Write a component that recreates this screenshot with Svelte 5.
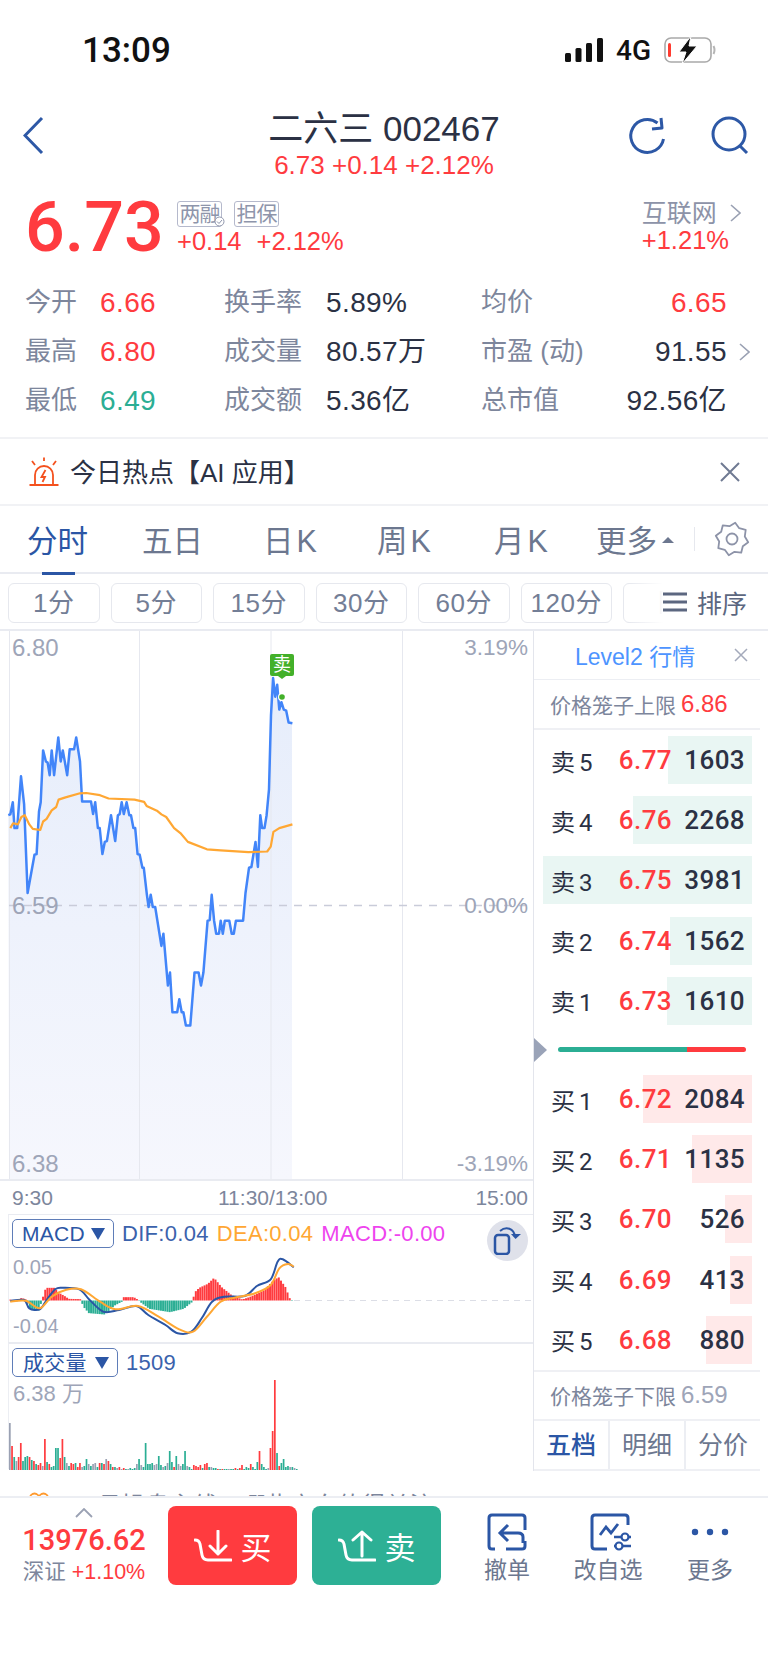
<script>
  const red = '#ff3b3f';
  const green = '#2bae94';

  // traced in the coordinates of the chart crop, scaled below
  const blueRaw = [[24,500],[30,498],[37,465],[42,535],[50,535],[61,395],[70,470],[80,710],[100,607],[106,605],[113,490],[118,465],[125,325],[133,355],[138,358],[144,392],[150,325],[157,392],[169,290],[176,355],[182,325],[195,392],[202,322],[215,322],[221,290],[232,355],[238,463],[264,463],[270,497],[276,465],[284,535],[289,535],[297,605],[304,572],[310,570],[322,500],[334,570],[342,500],[347,497],[353,465],[359,497],[367,465],[375,500],[380,500],[387,535],[392,535],[399,605],[405,607],[413,642],[417,642],[426,715],[431,748],[437,715],[443,748],[450,748],[468,853],[474,820],[487,960],[493,925],[500,1032],[514,1032],[520,997],[527,1032],[532,1032],[539,1068],[552,1068],[564,925],[576,925],[583,960],[590,925],[602,785],[608,783],[614,715],[621,785],[627,820],[635,820],[640,785],[646,820],[652,785],[665,785],[672,820],[678,820],[684,785],[705,785],[712,710],[722,642],[729,640],[741,572],[748,640],[755,500],[760,535],[767,535],[773,500],[780,430],[786,230],[792,130],[798,180],[804,148],[810,215],[816,195],[823,215],[830,218],[837,250],[848,252]];
  const orangeRaw = [[30,535],[38,522],[52,525],[62,505],[72,500],[85,525],[95,537],[117,540],[125,517],[135,510],[150,487],[163,478],[170,458],[190,452],[232,441],[250,440],[290,446],[315,455],[390,458],[418,464],[425,475],[455,488],[468,498],[482,505],[505,535],[525,550],[545,572],[600,592],[640,595],[720,600],[775,598],[785,585],[793,545],[810,535],[848,525]];
  const difRaw = [[30,303],[70,300],[85,325],[115,328],[135,300],[160,268],[180,263],[230,268],[260,300],[300,335],[345,330],[395,318],[430,345],[480,375],[515,400],[555,395],[585,355],[615,305],[650,290],[710,288],[745,258],[785,238],[805,185],[820,178],[852,202]];
  const deaRaw = [[30,305],[75,302],[115,325],[150,290],[190,270],[235,268],[290,305],[335,328],[400,318],[460,350],[520,388],[560,395],[600,350],[640,305],[680,293],[740,280],[785,255],[810,205],[835,192],[852,200]];
  const histRaw = [[26,3],[45,-3],[60,8],[72,3],[85,-25],[110,-30],[120,5],[130,38],[155,38],[165,25],[190,10],[195,5],[230,4],[240,-20],[255,-38],[300,-42],[330,-15],[350,-4],[355,10],[385,10],[398,2],[402,-3],[430,-25],[490,-35],[530,-25],[555,-4],[562,25],[575,38],[600,50],[618,68],[640,40],[670,15],[700,3],[720,10],[760,28],[790,60],[805,70],[825,40],[838,5],[845,-3],[852,-15]];

  const chartPt = ([x, y]) => [x / 2.9, y / 2.7 - 1];
  const macdPt = ([x, y]) => [x / 2.9, y / 3 - 15];
  const toLine = (pts) => pts.map((p) => p[0].toFixed(1) + ',' + p[1].toFixed(1)).join(' ');

  // catmull-rom through the traced points, for the macd curves
  const smooth = (pts) => {
    let d = 'M' + pts[0][0].toFixed(1) + ' ' + pts[0][1].toFixed(1);
    for (let i = 0; i < pts.length - 1; i++) {
      const p0 = pts[Math.max(i - 1, 0)];
      const p1 = pts[i];
      const p2 = pts[i + 1];
      const p3 = pts[Math.min(i + 2, pts.length - 1)];
      const c1 = [p1[0] + (p2[0] - p0[0]) / 6, p1[1] + (p2[1] - p0[1]) / 6];
      const c2 = [p2[0] - (p3[0] - p1[0]) / 6, p2[1] - (p3[1] - p1[1]) / 6];
      d += ' C' + [c1[0], c1[1], c2[0], c2[1], p2[0], p2[1]].map((n) => n.toFixed(1)).join(' ');
    }
    return d;
  };

  const bluePts = blueRaw.map(chartPt);
  const blueLine = toLine(bluePts);
  const orangeLine = toLine(orangeRaw.map(chartPt));
  const areaLine = toLine([[9, 548], ...bluePts, [292, bluePts[bluePts.length - 1][1]], [292, 548]]);
  const difPath = smooth(difRaw.map(macdPt));
  const deaPath = smooth(deaRaw.map(macdPt));

  const histAt = (x) => {
    for (let i = 1; i < histRaw.length; i++) {
      if (x <= histRaw[i][0]) {
        const [a, b] = [histRaw[i - 1], histRaw[i]];
        return a[1] + ((b[1] - a[1]) * (x - a[0])) / (b[0] - a[0]);
      }
    }
    return 0;
  };
  const histBars = Array.from({ length: 130 }, (_, i) => {
    const v = histAt(27 + i * 6.33) / 3;
    return { x: (27 + i * 6.33) / 2.9, v };
  });

  const volTokens = '47x 24r 13g 9x 13r 27r 9g 13g 14g 13r 10g 9r 6g 5r 7r 4x 31r 8g 6r 3g 4g 22g 22g 12r 31r 13g 7x 4g 7r 6r 7g 3r 7r 3x 4g 11g 6x 4g 6x 7x 3g 7r 7g 6r 11x 9r 6g 3r 3g 2x 3r 1x 2r 1g 1x 2g 1g 2g 6x 11g 5x 3g 27g 6g 6g 7g 5x 6x 14g 5g 3x 4g 7x 19g 8g 3r 14g 6x 4x 6g 19g 4x 3g 1g 5r 4r 3r 5r 2g 6r 7r 3g 3x 2g 2g 1r 1g 1r 1g 1g 1x 1g 1g 2r 1g 2r 5r 1g 3g 2g 6r 3g 1g 8g 19r 6g 3g 1g 2x 22r 39r 90r 17g 4r 7g 11g 3g 4g 3x 3g 2x 1g';
  const volBars = volTokens.split(' ').map((t, i) => ({
    x: 9 + i * 2.19,
    h: parseInt(t),
    c: { r: red, g: green, x: '#9aa1b3' }[t[t.length - 1]]
  }));

  // gear outline, eight rounded teeth
  const gearPts = Array.from({ length: 16 }, (_, i) => {
    const a = (i * Math.PI) / 8 + Math.PI / 16;
    const r = i % 2 ? 13 : 16.5;
    return (18 + r * Math.cos(a)).toFixed(1) + ',' + (18 + r * Math.sin(a)).toFixed(1);
  }).join(' ');

  const stats = [
    ['今开', '6.66', 'up', '换手率', '5.89%', '均价', '6.65', 'up', false],
    ['最高', '6.80', 'up', '成交量', '80.57万', '市盈 (动)', '91.55', '', true],
    ['最低', '6.49', 'down', '成交额', '5.36亿', '总市值', '92.56亿', '', false]
  ];
  const periods = ['1分', '5分', '15分', '30分', '60分', '120分', '日'];
  const sells = [
    ['卖 5', '6.77', '1603', 84],
    ['卖 4', '6.76', '2268', 119],
    ['卖 3', '6.75', '3981', 209],
    ['卖 2', '6.74', '1562', 82],
    ['卖 1', '6.73', '1610', 85]
  ];
  const buys = [
    ['买 1', '6.72', '2084', 109],
    ['买 2', '6.71', '1135', 60],
    ['买 3', '6.70', '526', 27],
    ['买 4', '6.69', '413', 22],
    ['买 5', '6.68', '880', 46]
  ];
</script>

<div class="page">
  <div class="status">
    <span class="clock">13:09</span>
    <div class="status-right">
      <svg width="38" height="24" viewBox="0 0 38 24">
        <rect x="0" y="15" width="6" height="9" rx="1.5" fill="#111" />
        <rect x="10.500" y="10" width="6" height="14" rx="1.5" fill="#111" />
        <rect x="21" y="5" width="6" height="19" rx="1.5" fill="#111" />
        <rect x="32" y="0" width="6" height="24" rx="1.5" fill="#111" />
      </svg>
      <span class="net">4G</span>
      <svg width="52" height="28" viewBox="0 0 52 28">
        <rect x="1" y="2" width="46" height="24" rx="6" fill="none" stroke="#a9a9a9" stroke-width="1.6" />
        <rect x="4" y="7" width="3" height="14" rx="1.500" fill="#ff3b30" />
        <path d="M49.500 10 q2 4 0 8" fill="none" stroke="#b5b5b5" stroke-width="2" />
        <path d="M27 0 L15 16 H22 L18 28 L33 10 H25 Z" fill="#111" stroke="#fff" stroke-width="1" />
      </svg>
    </div>
  </div>

  <div class="nav">
    <svg class="back" width="22" height="40" viewBox="0 0 22 40">
      <polyline points="19,2 2,19.500 19,37" fill="none" stroke="#2d58a6" stroke-width="3" />
    </svg>
    <div class="nav-title">
      <div class="name">二六三 002467</div>
      <div class="sub">6.73 +0.14 +2.12%</div>
    </div>
    <svg class="refresh" width="40" height="40" viewBox="0 0 40 40">
      <path d="M36.500 23 A16.500 16.500 0 1 1 30.500 7" fill="none" stroke="#2d58a6" stroke-width="3" />
      <path d="M34 2 L35 12 L25 13" fill="none" stroke="#2d58a6" stroke-width="3" stroke-linejoin="round" />
    </svg>
    <svg class="search" width="40" height="40" viewBox="0 0 40 40">
      <circle cx="19" cy="18" r="16" fill="none" stroke="#2d58a6" stroke-width="3" />
      <path d="M30 30 L37 37" stroke="#2d58a6" stroke-width="3" />
    </svg>
  </div>

  <div class="quote">
    <div class="price">6.73</div>
    <div class="quote-mid">
      <div class="badges">
        <span class="badge">两融<svg class="check" width="11" height="11" viewBox="0 0 11 11"><circle cx="5.500" cy="5.500" r="4.500" fill="#fff" stroke="#8e95ab" /><path d="M3 5.500 L5 7.500 L8 4" fill="none" stroke="#8e95ab" /></svg></span>
        <span class="badge">担保</span>
      </div>
      <div class="change"><span>+0.14</span><span>+2.12%</span></div>
    </div>
    <div class="quote-right">
      <div class="sector">互联网<svg width="11" height="18" viewBox="0 0 11 18"><polyline points="1,1 10,9 1,17" fill="none" stroke="#9aa1b3" stroke-width="1.600" /></svg></div>
      <div class="sector-change">+1.21%</div>
    </div>
  </div>

  <div class="stats">
    {#each stats as s}
      <div class="stat-row">
        <span class="label">{s[0]}</span>
        <span class="val" class:up={s[2] === 'up'} class:down={s[2] === 'down'}>{s[1]}</span>
        <span class="label">{s[3]}</span>
        <span class="val">{s[4]}</span>
        <span class="label">{s[5]}</span>
        <span class="val end" class:up={s[7] === 'up'}>{s[6]}</span>
        {#if s[8]}
          <svg class="row-arrow" width="11" height="18" viewBox="0 0 11 18"><polyline points="1,1 10,9 1,17" fill="none" stroke="#9aa1b3" stroke-width="1.600" /></svg>
        {/if}
      </div>
    {/each}
  </div>

  <div class="alert">
    <svg width="30" height="30" viewBox="0 0 30 30">
      <path d="M0.500 28 H29.500" stroke="#f4511e" stroke-width="2" />
      <path d="M6 27 V18 A9 9 0 0 1 24 18 V27" fill="none" stroke="#f4511e" stroke-width="1.800" />
      <path d="M16.500 13 L12.500 20 H16 L13.500 25" fill="none" stroke="#f4511e" stroke-width="1.800" />
      <path d="M15 0.500 V4 M3 4 L6 8 M27 4 L24 8" stroke="#f4511e" stroke-width="1.800" />
    </svg>
    <span class="alert-text">今日热点【AI 应用】</span>
    <svg class="alert-close" width="20" height="20" viewBox="0 0 20 20">
      <path d="M1 1 L19 19 M19 1 L1 19" stroke="#6f7a92" stroke-width="2" />
    </svg>
  </div>

  <div class="tabs">
    <div class="tab on">分时<i></i></div>
    <div class="tab t2">五日</div>
    <div class="tab t3">日K</div>
    <div class="tab t4">周K</div>
    <div class="tab t5">月K</div>
    <div class="tab t6">更多<b></b></div>
    <span class="tab-sep"></span>
    <svg class="gear" width="36" height="36" viewBox="0 0 36 36">
      <polygon points={gearPts} fill="none" stroke="#8d93a8" stroke-width="1.800" stroke-linejoin="round" />
      <circle cx="18" cy="18" r="5.500" fill="none" stroke="#8d93a8" stroke-width="1.800" />
    </svg>
  </div>

  <div class="chips">
    {#each periods as p}
      <span class="chip">{p}</span>
    {/each}
    <div class="sort">
      <svg width="24" height="20" viewBox="0 0 24 20"><path d="M0 2 H24 M0 10 H24 M0 18 H24" stroke="#5c6780" stroke-width="3" /></svg>
      <span>排序</span>
    </div>
  </div>

  <div class="main">
    <div class="left">
      <div class="chart">
        <svg class="plot" width="533" height="548" viewBox="0 0 533 548">
          <defs>
            <linearGradient id="area" x1="0" y1="0" x2="0" y2="1">
              <stop offset="0" stop-color="#e6edfb" />
              <stop offset="1" stop-color="#f6f7fd" />
            </linearGradient>
          </defs>
          <polygon points={areaLine} fill="url(#area)" />
          <path d="M9.500 0 V548 M139.500 0 V548 M271 0 V548 M402.500 0 V548" stroke="#e6e8ef" stroke-width="1" />
          <path d="M9 274.500 H533" stroke="#c9ccd9" stroke-width="1.600" stroke-dasharray="8 7" />
          <polyline points={blueLine} fill="none" stroke="#4285f9" stroke-width="2.500" stroke-linejoin="round" />
          <polyline points={orangeLine} fill="none" stroke="#ffa733" stroke-width="2.200" stroke-linejoin="round" />
          <circle cx="282" cy="66" r="4" fill="#fff" />
          <circle cx="282" cy="66" r="2.800" fill="#43b02a" />
        </svg>
        <span class="axis tl">6.80</span>
        <span class="axis tr">3.19%</span>
        <span class="axis ml">6.59</span>
        <span class="axis mr">0.00%</span>
        <span class="axis bl">6.38</span>
        <span class="axis br">-3.19%</span>
        <span class="sell-mark">卖</span>
      </div>
      <div class="times"><span>9:30</span><span class="mid-time">11:30/13:00</span><span>15:00</span></div>

      <div class="panel macd">
        <svg class="plot" width="533" height="127" viewBox="0 0 533 127">
          <path d="M294 85.500 H533" stroke="#dcdee6" stroke-width="1.200" stroke-dasharray="6 5" />
          {#each histBars as b}
            <rect x={b.x} y={b.v > 0 ? 85.5 - b.v : 85.5} width="2" height={Math.abs(b.v)} fill={b.v > 0 ? red : green} />
          {/each}
          <path d={difPath} fill="none" stroke="#2b56a5" stroke-width="2" />
          <path d={deaPath} fill="none" stroke="#ffa733" stroke-width="2" />
        </svg>
        <div class="legend">
          <span class="select">MACD<b></b></span>
          <span class="dif">DIF:0.04</span>
          <span class="dea">DEA:0.04</span>
          <span class="mac">MACD:-0.00</span>
        </div>
        <span class="axis m-top">0.05</span>
        <span class="axis m-bot">-0.04</span>
        <div class="swap">
          <svg width="30" height="28" viewBox="0 0 30 28">
            <rect x="2" y="8" width="14" height="19" rx="3" fill="none" stroke="#2b56a5" stroke-width="2.500" />
            <path d="M7 4 C13 -1 21 1 22 10" fill="none" stroke="#2b56a5" stroke-width="2" />
            <path d="M18 7 L22.500 12 L28 7 Z" fill="#2b56a5" />
          </svg>
        </div>
      </div>

      <div class="panel volume">
        <svg class="plot" width="533" height="126" viewBox="0 0 533 126">
          {#each volBars as b}
            <rect x={b.x} y={126 - b.h} width="1.700" height={b.h} fill={b.c} />
          {/each}
        </svg>
        <div class="legend">
          <span class="select wide">成交量<b></b></span>
          <span class="dif">1509</span>
        </div>
        <span class="axis v-top">6.38 万</span>
      </div>
    </div>

    <div class="book">
      <div class="book-head">
        <span>Level2 行情</span>
        <svg width="14" height="14" viewBox="0 0 14 14"><path d="M1 1 L13 13 M13 1 L1 13" stroke="#a4aabb" stroke-width="1.500" /></svg>
      </div>
      <div class="cage top"><span>价格笼子上限</span><em class="up">6.86</em></div>
      {#each sells as r}
        <div class="row">
          <i class="bar ask" style="width:{r[3]}px"></i>
          <span class="r-label">{r[0]}</span>
          <span class="r-price">{r[1]}</span>
          <span class="r-qty">{r[2]}</span>
        </div>
      {/each}
      <div class="meter">
        <span class="meter-arrow"></span>
        <div class="meter-bar"><i></i><u></u></div>
      </div>
      {#each buys as r}
        <div class="row">
          <i class="bar bid" style="width:{r[3]}px"></i>
          <span class="r-label">{r[0]}</span>
          <span class="r-price">{r[1]}</span>
          <span class="r-qty">{r[2]}</span>
        </div>
      {/each}
      <div class="cage low"><span>价格笼子下限</span><em>6.59</em></div>
      <div class="book-tabs">
        <span class="on">五档</span><span>明细</span><span>分价</span>
      </div>
    </div>
  </div>

  <div class="peek">
    <svg width="20" height="14" viewBox="0 0 20 14"><circle cx="5.500" cy="7" r="4.500" fill="none" stroke="#ff9a2e" stroke-width="1.800" /><circle cx="14.500" cy="7" r="4.500" fill="none" stroke="#ff9a2e" stroke-width="1.800" /></svg>
    <span>• 2月操盘主线，哪些方向值得关注</span>
  </div>

  <div class="bottom">
    <div class="index">
      <svg width="18" height="10" viewBox="0 0 18 10"><polyline points="1,9 9,1 17,9" fill="none" stroke="#9aa1b3" stroke-width="1.800" /></svg>
      <div class="index-val">13976.62</div>
      <div class="index-sub">深证 <em>+1.10%</em></div>
    </div>
    <div class="trade buy">
      <svg width="38" height="32" viewBox="0 0 38 32">
        <path d="M1 10 q4 0 5 4 L8 25 q1 5 6 5 H37" fill="none" stroke="#fff" stroke-width="3" stroke-linecap="round" />
        <path d="M24 1 V24 M16 16 L24 24 L32 16" fill="none" stroke="#fff" stroke-width="3" stroke-linecap="round" stroke-linejoin="round" />
      </svg>
      <span>买</span>
    </div>
    <div class="trade sell">
      <svg width="38" height="32" viewBox="0 0 38 32">
        <path d="M1 10 q4 0 5 4 L8 25 q1 5 6 5 H37" fill="none" stroke="#fff" stroke-width="3" stroke-linecap="round" />
        <path d="M24 26 V2 M15 10 L24 2 L33 10" fill="none" stroke="#fff" stroke-width="3" stroke-linecap="round" stroke-linejoin="round" />
      </svg>
      <span>卖</span>
    </div>
    <div class="action a1">
      <svg width="40" height="38" viewBox="0 0 40 38">
        <path d="M8 36 H5 Q2 36 2 33 V5 Q2 2 5 2 H35 Q38 2 38 5 V17 M38 28 V33 Q38 36 35 36 H19" fill="none" stroke="#2b56a5" stroke-width="3" />
        <path d="M36 30 V24 Q36 20 31 20 H14 M21 12 L13 20 L21 28" fill="none" stroke="#2b56a5" stroke-width="3" />
      </svg>
      <span>撤单</span>
    </div>
    <div class="action a2">
      <svg width="42" height="38" viewBox="0 0 42 38">
        <path d="M17 36 H5 Q2 36 2 33 V5 Q2 2 5 2 H35 Q38 2 38 5 V12" fill="none" stroke="#2b56a5" stroke-width="3" />
        <path d="M10 22 L16 14 L21 20 L28 11" fill="none" stroke="#2b56a5" stroke-width="2.800" />
        <path d="M24 24 H41 M24 33 H41" stroke="#2b56a5" stroke-width="2.500" />
        <circle cx="35" cy="24" r="3.500" fill="#fff" stroke="#2b56a5" stroke-width="2.200" />
        <circle cx="29" cy="33" r="3.500" fill="#fff" stroke="#2b56a5" stroke-width="2.200" />
      </svg>
      <span>改自选</span>
    </div>
    <div class="action a3">
      <svg width="38" height="38" viewBox="0 0 38 38">
        <circle cx="4" cy="19" r="3.200" fill="#2b56a5" />
        <circle cx="19" cy="19" r="3.200" fill="#2b56a5" />
        <circle cx="34" cy="19" r="3.200" fill="#2b56a5" />
      </svg>
      <span>更多</span>
    </div>
  </div>
</div>

<style>
  :global(body) {
    margin: 0;
    background: #fff;
  }

  .page {
    width: 768px;
    height: 1663px;
    background: #fff;
    overflow: hidden;
    font-family: 'Liberation Sans', 'Noto Sans CJK SC', sans-serif;
    color: #2b3144;
  }

  em {
    font-style: normal;
  }

  .up {
    color: #ff3b3f;
  }

  .down {
    color: #2bae94;
  }

  /* status bar */
  .status {
    height: 100px;
    display: flex;
    align-items: center;
    justify-content: space-between;
    padding: 0 52px 0 82px;
    box-sizing: border-box;
  }

  .clock {
    font-family: Roboto, sans-serif;
    font-weight: 500;
    font-size: 35px;
    color: #111;
  }

  .status-right {
    display: flex;
    align-items: center;
    gap: 13px;
  }

  .net {
    font-size: 28px;
    font-family: Roboto, sans-serif;
    font-weight: 500;
    color: #111;
  }

  /* nav */
  .nav {
    height: 84px;
    position: relative;
    display: flex;
    justify-content: center;
  }

  .nav-title {
    text-align: center;
    padding-top: 11px;
  }

  .name {
    font-size: 35px;
    line-height: 36px;
    color: #2b3144;
  }

  .sub {
    font-size: 26px;
    line-height: 30px;
    margin-top: 3px;
    color: #ff3b3f;
  }

  .back,
  .refresh,
  .search {
    position: absolute;
    top: 16px;
  }

  .back {
    left: 23px;
  }

  .refresh {
    left: 627px;
  }

  .search {
    left: 710px;
  }

  /* quote */
  .quote {
    height: 82px;
    display: flex;
    padding: 8px 6px 0 25px;
    box-sizing: border-box;
  }

  .price {
    width: 152px;
    font-family: Roboto, sans-serif;
    font-weight: 500;
    font-size: 70px;
    line-height: 70px;
    color: #ff3b3f;
  }

  .quote-mid {
    flex: 1;
  }

  .badges {
    display: flex;
    gap: 12px;
    margin-top: 9px;
  }

  .badge {
    position: relative;
    box-sizing: border-box;
    width: 45px;
    height: 26px;
    border: 1px solid #b5b9cc;
    border-radius: 3px;
    color: #8e95ab;
    font-size: 21px;
    line-height: 24px;
    text-align: center;
    white-space: nowrap;
    letter-spacing: -1px;
  }

  .check {
    position: absolute;
    right: -4px;
    bottom: -1px;
  }

  .change {
    display: flex;
    gap: 15px;
    font-size: 25.500px;
    line-height: 30px;
    margin-top: -1px;
    color: #ff3b3f;
  }

  .quote-right {
    text-align: right;
  }

  .sector {
    display: flex;
    align-items: center;
    gap: 13px;
    font-size: 25px;
    line-height: 30px;
    color: #8d93a8;
    margin-top: 6px;
  }

  .sector-change {
    font-size: 25.500px;
    line-height: 30px;
    color: #ff3b3f;
    margin-top: -3px;
    padding-right: 33px;
  }

  /* stats */
  .stats {
    padding: 12px 0 11px 25px;
    height: 171px;
    box-sizing: border-box;
  }

  .stat-row {
    display: grid;
    grid-template-columns: 75px 124px 102px 155px 100px 146px 20px;
    align-items: center;
    height: 49px;
  }

  .label {
    font-size: 26px;
    line-height: 30px;
    color: #7d869c;
    white-space: nowrap;
    margin-top: -1px;
  }

  .val {
    font-size: 28px;
    line-height: 30px;
    white-space: nowrap;
    letter-spacing: 0.4px;
  }

  .end {
    text-align: right;
  }

  .row-arrow {
    margin-left: 12px;
  }

  /* alert */
  .alert {
    height: 69px;
    box-sizing: border-box;
    border-top: 2px solid #f1f2f5;
    border-bottom: 2px solid #f1f2f5;
    display: flex;
    align-items: center;
    padding: 0 28px 0 29px;
  }

  .alert-text {
    margin-left: 11px;
    font-size: 26px;
    line-height: 32px;
    flex: 1;
    white-space: nowrap;
    margin-top: 2px;
  }

  /* tabs */
  .tabs {
    height: 68px;
    box-sizing: border-box;
    border-bottom: 2px solid #e9ebf1;
    position: relative;
    display: flex;
    align-items: center;
    padding-left: 27px;
    padding-bottom: 1px;
  }

  .tab {
    font-size: 30.500px;
    color: #6c778f;
    white-space: nowrap;
    width: 115px;
    flex: none;
  }

  .tab.on {
    color: #2b56a5;
    position: relative;
  }

  .tab.on i {
    position: absolute;
    left: 15px;
    bottom: -14px;
    width: 33px;
    height: 3px;
    background: #2b56a5;
  }

  .tab.t2 {
    width: 121px;
  }

  .tab.t3 {
    width: 114px;
    letter-spacing: 3px;
  }

  .tab.t4 {
    width: 117px;
    letter-spacing: 3px;
  }

  .tab.t5 {
    width: 102px;
    letter-spacing: 3px;
  }

  .tab.t6 {
    width: 98px;
    position: relative;
  }

  .tab.t6 b {
    position: absolute;
    left: 66px;
    top: 20px;
    border-left: 6px solid transparent;
    border-right: 6px solid transparent;
    border-bottom: 6px solid #6c778f;
  }

  .tab-sep {
    width: 1px;
    height: 24px;
    background: #e6e8ee;
    flex: none;
  }

  .gear {
    margin-left: 19px;
    flex: none;
  }

  /* period chips */
  .chips {
    height: 57px;
    box-sizing: border-box;
    border-bottom: 2px solid #e9ebf1;
    padding: 9px 0 0 8px;
    display: flex;
    gap: 11px;
    position: relative;
    overflow: hidden;
  }

  .chip {
    flex: none;
    width: 91.500px;
    height: 40px;
    box-sizing: border-box;
    border: 1px solid #e6e8ee;
    border-radius: 6px;
    text-align: center;
    line-height: 38px;
    font-size: 26px;
    color: #737e96;
    white-space: nowrap;
    letter-spacing: 0.5px;
  }

  .sort {
    position: absolute;
    right: 0;
    top: 0;
    bottom: 0;
    width: 140px;
    display: flex;
    align-items: center;
    gap: 10px;
    padding-left: 35px;
    box-sizing: border-box;
    background: linear-gradient(to right, rgba(255, 255, 255, 0), #fff 25%);
    font-size: 25px;
    color: #5c6780;
  }

  /* main area */
  .main {
    display: flex;
    height: 840px;
  }

  .left {
    width: 533px;
    flex: none;
  }

  .chart {
    height: 548px;
    position: relative;
    border-bottom: 2px solid #e9ebf1;
    box-sizing: content-box;
  }

  .plot {
    position: absolute;
    left: 0;
    top: 0;
    display: block;
  }

  .axis {
    position: absolute;
    font-size: 24px;
    line-height: 28px;
    color: #9ea5b8;
    white-space: nowrap;
  }

  .tl {
    left: 12px;
    top: 3px;
  }

  .tr {
    right: 5px;
    top: 3px;
    font-size: 22.500px;
  }

  .ml {
    left: 12px;
    top: 261px;
  }

  .mr {
    right: 5px;
    top: 261px;
    font-size: 22.500px;
  }

  .bl {
    left: 12px;
    top: 519px;
  }

  .br {
    right: 5px;
    top: 519px;
    font-size: 22.500px;
  }

  .sell-mark {
    position: absolute;
    left: 270px;
    top: 23px;
    width: 24px;
    height: 22px;
    background: #43b02a;
    border-radius: 2px;
    color: #fff;
    font-size: 18px;
    line-height: 22px;
    text-align: center;
  }

  .sell-mark::after {
    content: '';
    position: absolute;
    left: 8px;
    top: 22px;
    border-left: 4px solid transparent;
    border-right: 4px solid transparent;
    border-top: 3px solid #43b02a;
  }

  .times {
    height: 33px;
    display: flex;
    justify-content: space-between;
    align-items: center;
    padding: 0 5px 0 12px;
    font-size: 21px;
    color: #7d869c;
    position: relative;
  }

  .mid-time {
    position: absolute;
    left: 218px;
  }

  .panel {
    position: relative;
    height: 128px;
    box-sizing: border-box;
    border-top: 1px solid #e9ebf1;
    border-left: 1px solid #eceef3;
    margin-left: 8px;
  }

  .panel .plot {
    left: -9px;
  }

  .volume {
    border-top: 2px solid #e9ebf1;
    height: 127px;
  }

  .legend {
    position: relative;
    display: flex;
    align-items: center;
    gap: 8px;
    padding: 4px 0 0 3px;
    font-size: 22px;
    letter-spacing: 0.3px;
  }

  .select {
    box-sizing: border-box;
    width: 102px;
    height: 29px;
    border: 1.5px solid #5f7db8;
    border-radius: 5px;
    color: #2b56a5;
    line-height: 27px;
    padding-left: 9px;
    position: relative;
    font-size: 21px;
  }

  .select.wide {
    width: 106px;
    padding-left: 10px;
  }

  .select b {
    position: absolute;
    right: 8px;
    top: 8px;
    border-left: 7px solid transparent;
    border-right: 7px solid transparent;
    border-top: 12px solid #2b56a5;
  }

  .dif {
    color: #3b62ac;
  }

  .dea {
    color: #ffa733;
  }

  .mac {
    color: #ee44ee;
  }

  .m-top {
    left: 4px;
    top: 38px;
    font-size: 20px;
  }

  .m-bot {
    left: 4px;
    top: 97px;
    font-size: 20px;
  }

  .v-top {
    left: 4px;
    top: 36px;
    font-size: 22px;
  }

  .swap {
    position: absolute;
    left: 478px;
    top: 5px;
    width: 41px;
    height: 41px;
    border-radius: 50%;
    background: #dfe1ea;
    display: flex;
    align-items: center;
    justify-content: center;
  }

  /* order book */
  .book {
    width: 227px;
    flex: none;
    box-sizing: border-box;
    border-left: 1px solid #e3e5ec;
  }

  .book-head {
    height: 49px;
    border-bottom: 1px solid #eceef3;
    display: flex;
    align-items: center;
    color: #4d94ff;
    font-size: 23px;
    padding-left: 41px;
    box-sizing: border-box;
    position: relative;
  }

  .book-head svg {
    position: absolute;
    left: 200px;
    top: 17px;
  }

  .cage {
    display: flex;
    align-items: center;
    font-size: 21px;
    padding-left: 16px;
    color: #7d869c;
    box-sizing: border-box;
  }

  .cage em {
    margin-left: 5px;
    font-size: 24px;
  }

  .cage.top {
    height: 50px;
    border-bottom: 2px solid #eff0f4;
  }

  .cage.low {
    height: 49px;
    border-top: 2px solid #eff0f4;
  }

  .cage.low em {
    color: #9ea5b8;
  }

  .row {
    height: 60.2px;
    position: relative;
    display: flex;
    align-items: center;
    padding: 0 15px 0 17px;
    box-sizing: border-box;
    font-family: Roboto, 'Noto Sans CJK SC', sans-serif;
    font-weight: 500;
    font-size: 26px;
  }

  .bar {
    position: absolute;
    right: 8px;
    top: 6px;
    height: 48px;
  }

  .bar.ask {
    background: #e9f6f3;
  }

  .bar.bid {
    background: #ffe9e9;
  }

  .r-label {
    position: relative;
    font-size: 24px;
    font-weight: 400;
    width: 50px;
    white-space: nowrap;
    word-spacing: -2px;
  }

  .r-price {
    position: relative;
    width: 71px;
    text-align: right;
    color: #ff3b3f;
    letter-spacing: 0.4px;
  }

  .r-qty {
    position: relative;
    flex: 1;
    text-align: right;
    letter-spacing: 0.4px;
  }

  .meter {
    height: 38px;
    position: relative;
    display: flex;
    align-items: center;
    padding-left: 24px;
  }

  .meter-arrow {
    position: absolute;
    left: 0;
    top: 7px;
    border-top: 12px solid transparent;
    border-bottom: 12px solid transparent;
    border-left: 13px solid #9aa3b8;
  }

  .meter-bar {
    width: 188px;
    height: 5px;
    display: flex;
    border-radius: 3px;
    overflow: hidden;
  }

  .meter-bar i {
    width: 129px;
    background: #2bae94;
  }

  .meter-bar u {
    flex: 1;
    background: #ff3b3f;
  }

  .book-tabs {
    height: 52px;
    display: flex;
    box-sizing: border-box;
    border-top: 2px solid #eff0f4;
    border-bottom: 2px solid #eff0f4;
  }

  .book-tabs span {
    flex: 1;
    text-align: center;
    line-height: 48px;
    font-size: 25px;
    color: #6c778f;
    border-left: 2px solid #eceef3;
  }

  .book-tabs span:first-child {
    border-left: none;
  }

  .book-tabs .on {
    color: #2b56a5;
    font-weight: 500;
  }

  /* peek of the content below, cut off by the bar */
  .peek {
    height: 25px;
    overflow: hidden;
    display: flex;
    align-items: flex-start;
    padding: 20px 0 0 29px;
    box-sizing: border-box;
    gap: 20px;
    font-size: 24px;
    color: #7d869c;
    white-space: nowrap;
  }

  .peek span {
    margin-top: -5px;
  }

  .bottom {
    border-top: 2px solid #eceef3;
    display: flex;
    height: 95px;
    box-sizing: border-box;
    position: relative;
  }

  .index {
    width: 168px;
    flex: none;
    text-align: center;
    padding-top: 10px;
    box-sizing: border-box;
  }

  .index svg {
    display: block;
    margin: 0 auto;
  }

  .index-val {
    font-family: Roboto, sans-serif;
    font-size: 29px;
    font-weight: 500;
    line-height: 34px;
    color: #ff3b3f;
    margin-top: 5px;
  }

  .index-sub {
    font-size: 21.500px;
    line-height: 28px;
    color: #7d869c;
    margin-top: 1px;
  }

  .index-sub em {
    color: #ff3b3f;
  }

  .trade {
    width: 129px;
    height: 79px;
    margin-top: 8px;
    border-radius: 8px;
    flex: none;
    display: flex;
    align-items: center;
    justify-content: center;
    gap: 9px;
    color: #fff;
    font-size: 31px;
  }

  .buy {
    background: #ff3b3f;
  }

  .sell {
    background: #2db095;
    margin-left: 15px;
  }

  .action {
    flex: none;
    display: flex;
    flex-direction: column;
    align-items: center;
    font-size: 23px;
    color: #6c778f;
    padding-top: 15px;
    line-height: 30px;
    width: 76px;
  }

  .a1 {
    margin-left: 28px;
  }

  .a2 {
    margin-left: 25px;
  }

  .a3 {
    margin-left: 26px;
  }

  .action svg {
    margin-bottom: 4px;
  }

  .a2 svg {
    margin-left: 5px;
  }
</style>
